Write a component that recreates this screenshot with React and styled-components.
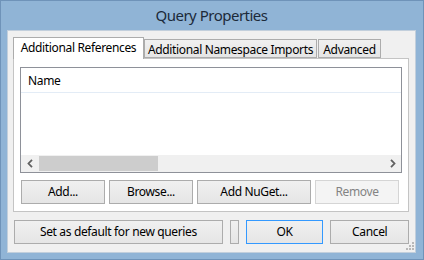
import React from "react";
import styled, { createGlobalStyle } from "styled-components";

const Global = createGlobalStyle`
  html, body { margin: 0; padding: 0; background: #90b4d6; }
  * { box-sizing: border-box; }
  body { font-family: "Noto Sans", "Open Sans", sans-serif; font-size: 12px; color: #000; }
`;

const Window = styled.div`
  width: 424px;
  height: 260px;
  border: 1px solid #6f93b9;
  background: #90b4d6;
  display: flex;
  flex-direction: column;
  padding: 0 7px 6px 6px;
`;

const TitleBar = styled.div`
  height: 29px;
  display: flex;
  align-items: center;
  justify-content: center;
  font-size: 15px;
  letter-spacing: -0.5px;
  color: #1c2a3a;
  padding-bottom: 1px;
`;

const Client = styled.div`
  position: relative;
  flex: 1;
  background: #f0f0f0;
  border: 1px solid #c2cfdc;
  display: flex;
  flex-direction: column;
  padding: 6px 6px 8px 5px;
`;

const TabStrip = styled.div`
  height: 21px;
  display: flex;
  align-items: flex-end;
`;

const Tab = styled.div`
  position: relative;
  width: ${(p) => p.$w}px;
  margin-left: ${(p) => p.$ml || 0}px;
  height: ${(p) => (p.$active ? 22 : 19)}px;
  margin-bottom: ${(p) => (p.$active ? -1 : 0)}px;
  z-index: ${(p) => (p.$active ? 1 : 0)};
  border: 1px solid #acacac;
  border-bottom: ${(p) => (p.$active ? "none" : "1px solid #acacac")};
  background: ${(p) => (p.$active ? "#fff" : "linear-gradient(#f0f0f0, #e5e5e5)")};
  display: flex;
  align-items: center;
  padding-top: ${(p) => (p.$active ? 0 : 2)}px;
  padding-bottom: ${(p) => (p.$active ? 3 : 0)}px;
  justify-content: center;
  letter-spacing: -0.35px;
  white-space: nowrap;
`;

const Panel = styled.div`
  width: 396px;
  height: 154px;
  border: 1px solid #c4c4c4;
  background: #fff;
  display: flex;
  flex-direction: column;
  padding: 8px 6px 7px 6px;
`;

const List = styled.div`
  height: 106px;
  border: 1px solid #8e9199;
  display: flex;
  flex-direction: column;
  background: #fff;
`;

const Header = styled.div`
  height: 25px;
  border-bottom: 1px solid #e3ecf6;
  display: flex;
  align-items: center;
  padding-left: 7px;
  letter-spacing: -0.35px;
`;

const ListBody = styled.div`
  flex: 1;
`;

const HScroll = styled.div`
  height: 17px;
  background: #f0f0f0;
  display: flex;
  align-items: center;
`;

const Arrow = styled.div`
  width: 17px;
  height: 17px;
  display: flex;
  align-items: center;
  justify-content: center;
`;

const Track = styled.div`
  flex: 1;
  height: 17px;
  display: flex;
  align-items: center;
  padding: 0 1px;
`;

const Thumb = styled.div`
  width: 119px;
  height: 15px;
  background: #cdcdcd;
`;

const ButtonRow = styled.div`
  display: flex;
  gap: 4px;
  margin-top: 7px;
  padding-left: 1px;
`;

const Button = styled.div`
  width: ${(p) => p.$w}px;
  height: 24px;
  border: 1px solid ${(p) => (p.$default ? "#3399ff" : p.$disabled ? "#d5d5d5" : "#acacac")};
  background: ${(p) => (p.$disabled ? "#f4f4f4" : "linear-gradient(#f0f0f0, #e5e5e5)")};
  color: ${(p) => (p.$disabled ? "#838383" : "#000")};
  display: flex;
  align-items: center;
  justify-content: center;
  letter-spacing: -0.35px;
  white-space: nowrap;
  padding-bottom: 1px;
`;

const BottomRow = styled.div`
  display: flex;
  gap: 7px;
  margin-top: 8px;
  padding-left: 1px;
`;

const Grip = styled.svg`
  position: absolute;
  right: 1px;
  bottom: 2px;
`;

const Chevron = ({ dir }) => (
  <svg width="6" height="9" viewBox="0 0 6 9">
    <path
      d={dir === "left" ? "M5 0.8 L1.5 4.5 L5 8.2" : "M1 0.8 L4.5 4.5 L1 8.2"}
      fill="none"
      stroke="#606060"
      strokeWidth="1.8"
    />
  </svg>
);

export default function App() {
  return (
    <>
      <Global />
      <Window>
        <TitleBar>Query Properties</TitleBar>
        <Client>
          <TabStrip>
            <Tab $active $w={131}>Additional References</Tab>
            <Tab $w={173}>Additional Namespace Imports</Tab>
            <Tab $w={63} $ml={1}>Advanced</Tab>
          </TabStrip>
          <Panel>
            <List>
              <Header>Name</Header>
              <ListBody />
              <HScroll>
                <Arrow>
                  <Chevron dir="left" />
                </Arrow>
                <Track>
                  <Thumb />
                </Track>
                <Arrow>
                  <Chevron dir="right" />
                </Arrow>
              </HScroll>
            </List>
            <ButtonRow>
              <Button $w={84}>Add...</Button>
              <Button $w={84}>Browse...</Button>
              <Button $w={114}>Add NuGet...</Button>
              <Button $w={84} $disabled>Remove</Button>
            </ButtonRow>
          </Panel>
          <BottomRow>
            <Button $w={210}>Set as default for new queries</Button>
            <Button $w={9} />
            <Button $w={78} $default>OK</Button>
            <Button $w={79}>Cancel</Button>
          </BottomRow>
          <Grip width="9" height="9" viewBox="0 0 9 9">
            <rect x="7" y="1" width="2" height="2" fill="#b8b8b8" />
            <rect x="4" y="4" width="2" height="2" fill="#b8b8b8" />
            <rect x="7" y="4" width="2" height="2" fill="#b8b8b8" />
            <rect x="1" y="7" width="2" height="2" fill="#b8b8b8" />
            <rect x="4" y="7" width="2" height="2" fill="#b8b8b8" />
            <rect x="7" y="7" width="2" height="2" fill="#b8b8b8" />
          </Grip>
        </Client>
      </Window>
    </>
  );
}
